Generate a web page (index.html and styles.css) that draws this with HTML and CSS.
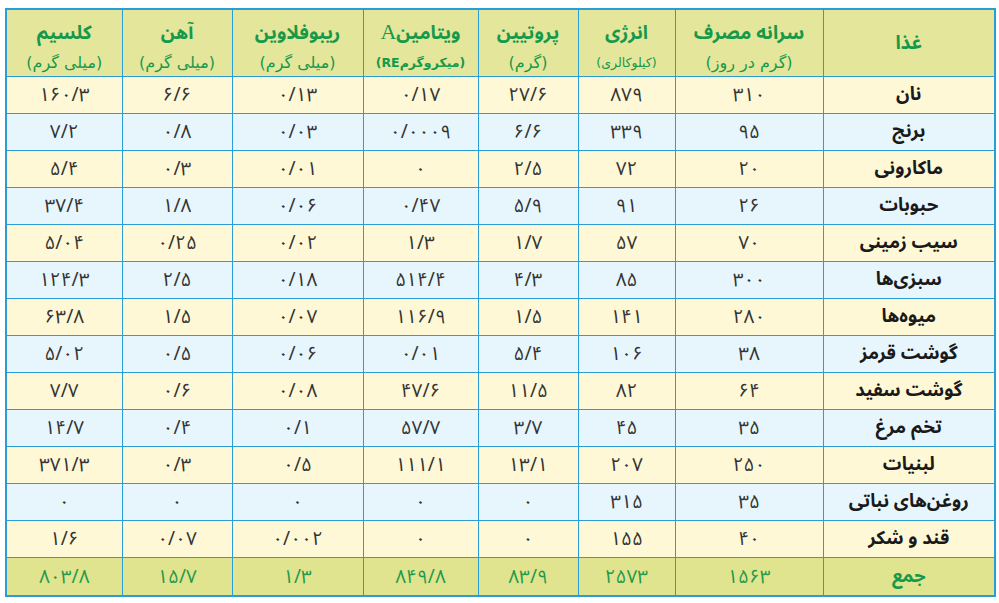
FILE: index.html
```html
<!DOCTYPE html>
<html lang="fa" dir="rtl">
<head>
<meta charset="utf-8">
<link rel="stylesheet" href="styles.css">
</head>
<body>
<table class="food">
<colgroup>
<col class="c-food"><col class="c-per"><col class="c-en"><col class="c-pro"><col class="c-vit"><col class="c-rib"><col class="c-fe"><col class="c-ca">
</colgroup>
<thead>
<tr>
<th><span class="t">غذا</span></th>
<th><span class="t">سرانه مصرف</span><span class="s">(گرم در روز)</span></th>
<th><span class="t">انرژی</span><span class="s sm">(کیلوکالری)</span></th>
<th><span class="t">پروتیین</span><span class="s">(گرم)</span></th>
<th><span class="t">ویتامین<span class="lat">A</span></span><span class="s sm b">(میکروگرمRE)</span></th>
<th><span class="t">ریبوفلاوین</span><span class="s">(میلی گرم)</span></th>
<th><span class="t">آهن</span><span class="s">(میلی گرم)</span></th>
<th><span class="t">کلسیم</span><span class="s">(میلی گرم)</span></th>
</tr>
</thead>
<tbody>
<tr class="y"><td class="f">نان</td><td>۳۱۰</td><td>۸۷۹</td><td>۲۷/۶</td><td>۰/۱۷</td><td>۰/۱۳</td><td>۶/۶</td><td>۱۶۰/۳</td></tr>
<tr class="b"><td class="f">برنج</td><td>۹۵</td><td>۳۳۹</td><td>۶/۶</td><td>۰/۰۰۰۹</td><td>۰/۰۳</td><td>۰/۸</td><td>۷/۲</td></tr>
<tr class="y"><td class="f">ماکارونی</td><td>۲۰</td><td>۷۲</td><td>۲/۵</td><td>۰</td><td>۰/۰۱</td><td>۰/۳</td><td>۵/۴</td></tr>
<tr class="b"><td class="f">حبوبات</td><td>۲۶</td><td>۹۱</td><td>۵/۹</td><td>۰/۴۷</td><td>۰/۰۶</td><td>۱/۸</td><td>۳۷/۴</td></tr>
<tr class="y"><td class="f">سیب زمینی</td><td>۷۰</td><td>۵۷</td><td>۱/۷</td><td>۱/۳</td><td>۰/۰۲</td><td>۰/۲۵</td><td>۵/۰۴</td></tr>
<tr class="b"><td class="f">سبزی‌ها</td><td>۳۰۰</td><td>۸۵</td><td>۴/۳</td><td>۵۱۴/۴</td><td>۰/۱۸</td><td>۲/۵</td><td>۱۲۴/۳</td></tr>
<tr class="y"><td class="f">میوه‌ها</td><td>۲۸۰</td><td>۱۴۱</td><td>۱/۵</td><td>۱۱۶/۹</td><td>۰/۰۷</td><td>۱/۵</td><td>۶۳/۸</td></tr>
<tr class="b"><td class="f">گوشت قرمز</td><td>۳۸</td><td>۱۰۶</td><td>۵/۴</td><td>۰/۰۱</td><td>۰/۰۶</td><td>۰/۵</td><td>۵/۰۲</td></tr>
<tr class="y"><td class="f">گوشت سفید</td><td>۶۴</td><td>۸۲</td><td>۱۱/۵</td><td>۴۷/۶</td><td>۰/۰۸</td><td>۰/۶</td><td>۷/۷</td></tr>
<tr class="b"><td class="f">تخم مرغ</td><td>۳۵</td><td>۴۵</td><td>۳/۷</td><td>۵۷/۷</td><td>۰/۱</td><td>۰/۴</td><td>۱۴/۷</td></tr>
<tr class="y"><td class="f">لبنیات</td><td>۲۵۰</td><td>۲۰۷</td><td>۱۳/۱</td><td>۱۱۱/۱</td><td>۰/۵</td><td>۰/۳</td><td>۳۷۱/۳</td></tr>
<tr class="b"><td class="f">روغن‌های نباتی</td><td>۳۵</td><td>۳۱۵</td><td>۰</td><td>۰</td><td>۰</td><td>۰</td><td>۰</td></tr>
<tr class="y"><td class="f">قند و شکر</td><td>۴۰</td><td>۱۵۵</td><td>۰</td><td>۰</td><td>۰/۰۰۲</td><td>۰/۰۷</td><td>۱/۶</td></tr>
<tr class="total"><td class="f">جمع</td><td>۱۵۶۳</td><td>۲۵۷۳</td><td>۸۳/۹</td><td>۸۴۹/۸</td><td>۱/۳</td><td>۱۵/۷</td><td>۸۰۳/۸</td></tr>
</tbody>
</table>
</body>
</html>
```
FILE: styles.css
```css
html, body {
  margin: 0;
  padding: 0;
  background: #ffffff;
}
body {
  padding: 8px 3px 0 7px;
  font-family: "Noto Sans Arabic", "Noto Naskh Arabic", "DejaVu Sans", sans-serif;
}
.food {
  border-collapse: collapse;
  table-layout: fixed;
  width: 989px;
  border: 2px solid #2a9ed4;
}
.c-food { width: 172px; }
.c-per { width: 148px; }
.c-en { width: 97px; }
.c-pro { width: 100px; }
.c-vit { width: 115px; }
.c-rib { width: 131px; }
.c-fe { width: 110px; }
.c-ca { width: 116px; }
.food th, .food td {
  border: 1.5px solid #2a9ed4;
  text-align: center;
  padding: 0;
}
.food th {
  height: 66px;
  background: #e4e69c;
  color: #16994a;
  vertical-align: middle;
}
.food th .t {
  display: block;
  font-size: 19px;
  font-weight: bold;
  line-height: 38px;
}
.food th .s {
  display: block;
  font-family: "DejaVu Sans", sans-serif;
  font-size: 16px;
  font-weight: normal;
  line-height: 21px;
}
.food th .s.sm {
  font-size: 12.5px;
  line-height: 21px;
}
.food th .s.b { font-weight: bold; }
.food th .lat {
  font-family: "Liberation Serif", serif;
  font-weight: normal;
  font-size: 22px;
}
.food td {
  height: 36px;
  font-size: 19px;
  color: #333333;
  line-height: 24px;
}
.food td.f {
  font-weight: bold;
  font-size: 18.5px;
  color: #1a1a1a;
}
.food tr.y td { background: #fef8d6; }
.food tr.b td { background: #e7f6fd; }
.food tr.total td {
  background: #e1e48e;
  color: #1f9a4c;
  height: 37px;
}
.food tr.total td.f {
  color: #16994a;
}
```
